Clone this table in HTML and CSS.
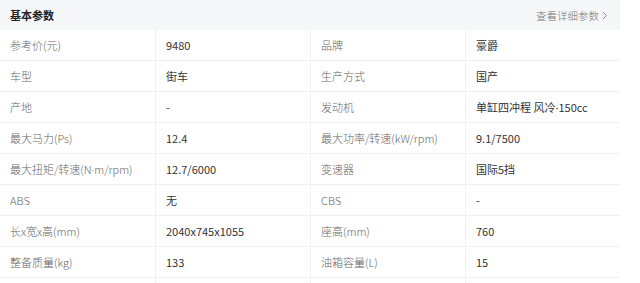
FILE: index.html
```html
<!DOCTYPE html>
<html lang="zh-CN">
<head>
<meta charset="utf-8">
<link rel="stylesheet" href="styles.css">
</head>
<body>
<div class="panel">
  <div class="head">
    <span class="title">基本参数</span>
    <span class="more">查看详细参数<svg class="chev" width="6" height="9" viewBox="0 0 6 9"><path d="M1 1l3.5 3.5L1 8" fill="none" stroke="#888" stroke-width="1"/></svg></span>
  </div>
  <div class="grid">
    <div class="c k">参考价(元)</div><div class="c v">9480</div><div class="c k">品牌</div><div class="c v">豪爵</div>
    <div class="c k">车型</div><div class="c v">街车</div><div class="c k">生产方式</div><div class="c v">国产</div>
    <div class="c k">产地</div><div class="c v">-</div><div class="c k">发动机</div><div class="c v">单缸四冲程 风冷<span class="dot">·</span>150cc</div>
    <div class="c k">最大马力(Ps)</div><div class="c v">12.4</div><div class="c k">最大功率/转速(kW/rpm)</div><div class="c v">9.1/7500</div>
    <div class="c k">最大扭矩/转速(N<span class="dot">·</span>m/rpm)</div><div class="c v">12.7/6000</div><div class="c k">变速器</div><div class="c v">国际5挡</div>
    <div class="c k">ABS</div><div class="c v">无</div><div class="c k">CBS</div><div class="c v">-</div>
    <div class="c k">长x宽x高(mm)</div><div class="c v">2040x745x1055</div><div class="c k">座高(mm)</div><div class="c v">760</div>
    <div class="c k">整备质量(kg)</div><div class="c v">133</div><div class="c k">油箱容量(L)</div><div class="c v">15</div>
    <div class="c k"></div><div class="c v"></div><div class="c k"></div><div class="c v"></div>
  </div>
</div>
</body>
</html>
```
FILE: styles.css
```css
* { box-sizing: border-box; margin: 0; padding: 0; }
html, body { background: #fff; }
body {
  margin: 0;
  font-family: "Noto Sans CJK SC", "Noto Sans", sans-serif;
  font-size: 11px;
  font-weight: 300;
  color: #333;
}
.panel { width: 620px; }
.head {
  height: 30px;
  background: #f6f7f9;
  display: flex;
  align-items: center;
  justify-content: space-between;
  padding: 0 12px 0 10px;
}
.title { font-weight: bold; color: #222; font-size: 11px; }
.more { color: #777; display: flex; align-items: center; gap: 3px; font-size: 10.5px; }
.chev { display: block; }
.grid {
  display: grid;
  grid-template-columns: 155px 155px 155px 155px;
  grid-auto-rows: 31px;
}
.c {
  display: flex;
  align-items: center;
  padding-left: 10px;
  border-bottom: 1px solid #eff0f2;
  white-space: nowrap;
}
.c + .c { border-left: 1px solid #eff0f2; }
.grid > .c:nth-child(4n+1) { border-left: none; }
.k { color: #666; }
.v { color: #333; font-weight: 400; }
.dot { font-family: "Noto Sans", sans-serif; }
```
